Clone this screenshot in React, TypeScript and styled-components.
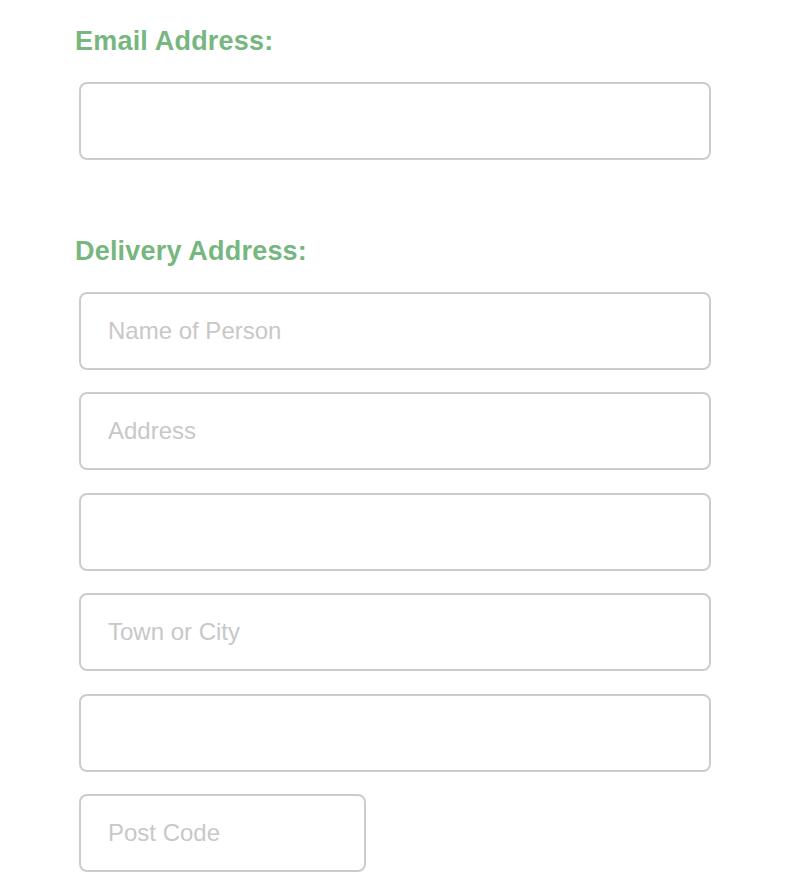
import React from "react";
import styled, { createGlobalStyle } from "styled-components";

const GlobalStyle = createGlobalStyle`
  body {
    margin: 0;
    background: #ffffff;
    font-family: "Liberation Sans", Arial, sans-serif;
  }
`;

const Page = styled.div`
  display: flex;
  flex-direction: column;
  padding: 23px 0 0 75px;
  width: 640px;
`;

const Section = styled.section`
  display: flex;
  flex-direction: column;
  margin-bottom: ${(p: { spaced?: boolean }) => (p.spaced ? "73px" : "0")};
`;

const Heading = styled.h2`
  margin: 0 0 22px 0;
  font-size: 27px;
  line-height: 37px;
  font-weight: 700;
  letter-spacing: 0.2px;
  color: #77b77f;
`;

const Fields = styled.div`
  display: flex;
  flex-direction: column;
  gap: 22.4px;
  padding-left: 4px;
`;

const Input = styled.input<{ $short?: boolean }>`
  box-sizing: border-box;
  width: ${(p) => (p.$short ? "287px" : "632px")};
  height: 78px;
  padding: 0 27px;
  border: 2px solid #cccccc;
  border-radius: 8px;
  background: #ffffff;
  font-family: "Liberation Sans", Arial, sans-serif;
  font-size: 24px;
  color: #333333;
  outline: none;

  &::placeholder {
    color: #c8c8c8;
  }
`;

const App = () => {
  return (
    <>
      <GlobalStyle />
      <Page>
        <Section spaced>
          <Heading>Email Address:</Heading>
          <Fields>
            <Input type="email" />
          </Fields>
        </Section>
        <Section>
          <Heading>Delivery Address:</Heading>
          <Fields>
            <Input placeholder="Name of Person" />
            <Input placeholder="Address" />
            <Input />
            <Input placeholder="Town or City" />
            <Input />
            <Input $short placeholder="Post Code" />
          </Fields>
        </Section>
      </Page>
    </>
  );
};

export default App;
